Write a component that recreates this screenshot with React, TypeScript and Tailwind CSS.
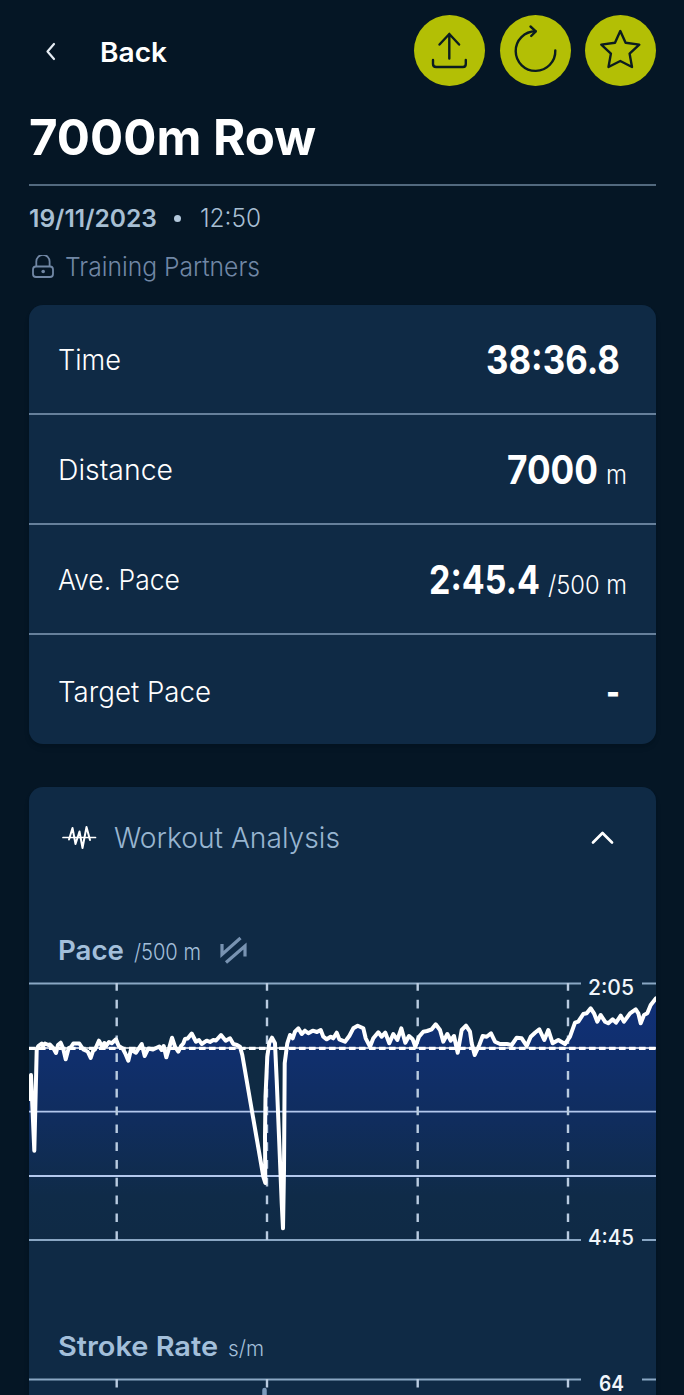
import React from "react";

const stats = [
  { label: "Time", labelWidth: 63, value: "38:36.8", unit: "", width: 134 },
  { label: "Distance", labelWidth: 115, value: "7000", unit: "m", width: 91 },
  { label: "Ave. Pace", labelWidth: 122, value: "2:45.4", unit: "/500 m", width: 111 },
  { label: "Target Pace", labelWidth: 153, value: "-", unit: "", width: 14 },
];

const pacePoints =
  "0,116 2,92 5.3,167.7 7.7,67 9.3,63 12.7,60.5 14,63 16,60.5 19.3,62 21,61.5 24.3,65 27,70 29,62 31.7,59.7 34.3,66 36.7,76.3 39.7,65 42,64 44.3,60.5 50.3,60.5 54.3,66.5 58.7,68.5 61.7,75 64,68 66,66.5 70,57.7 73,63.7 75.3,60 77,63 80,59 82.7,60.3 87,56.3 89.7,63 93.7,65.5 96.3,70.5 99.3,77.7 102,66.5 107,69.7 110,65 112.7,61 115.7,73 119.3,65.5 124,66.5 130.3,63.5 132.7,67 134.7,63 137.3,74.3 140,65.5 143,54.7 146,63.7 149.3,68.7 152,63 154.3,60.5 156,56 158.7,55.5 162.7,50.5 167,58.7 170,57 172.7,61 177.7,57.7 181,59 184.3,57 187,57.5 192,52 196.7,57.7 201,55.3 204.3,61 208,62 211,63.7 213.3,72 234.3,193.7 236.3,200 236,153.7 236.5,113.7 238.3,73.7 240.3,59.7 243,54.7 246,60.3 247.7,97 252.7,220 254,245.3 255,187 255.7,80.3 258.3,60.3 261,52 263.7,55.3 266,48.7 269.3,45.3 272.7,51 276,47.7 279.3,50.3 283.7,47.7 288,49 291.7,47 294.3,53.7 297.7,56.3 301.7,53.7 304.3,55.3 307.7,49.7 310.3,56.3 316,58.7 320.3,53 324.3,45.3 328.7,42.7 334.3,45.3 336.7,55.3 341,63.7 344.3,55.3 349.3,49.3 352.7,53.7 356.3,49.7 360.3,60.3 364.3,51 368.3,57 372.3,45.3 376.3,59.7 380,53 383.7,56.3 386.3,63.7 390,53.7 394.3,48.7 398,48 402.7,46.3 406.7,41.3 411,47 414.3,58.7 418.3,51 421.7,57.7 425,53 428.7,69.7 432.7,47 437,42.7 441,48.7 442.7,60.3 445.7,72 450.3,62 453.7,53 457.7,53.7 462,50.3 466,58.7 471,61 477.7,61 482.7,62 487.7,54.7 492.7,55.3 497.7,63 501.7,53.7 506,49.7 510.3,46.3 512,50 515.3,57 519.3,47 523.7,60.3 529.3,57 536,61 541,53.7 546,39.7 549.3,38.7 554.3,31 557.7,30.3 561.7,25.3 565,30.3 568.3,38.7 571.7,32 576,38.7 579.3,40.3 583.7,36.3 587,39.7 591.7,32.7 595,38.7 601,30.3 606.7,26.3 609.3,30.3 611.7,40.3 615,32 618.3,30.3 621.7,22 627,15.3";

const ticks = [87.7, 238, 388.7, 539];

function RoundButton({ label, children }: { label: string; children: React.ReactNode }) {
  return (
    <button aria-label={label} className="w-[71px] h-[71px] rounded-full bg-[#b3bf05] text-[#0b1c20]">
      <svg viewBox="0 0 71 71" className="w-full h-full" fill="none" stroke="currentColor" strokeWidth="2.4" strokeLinecap="round" strokeLinejoin="round">
        {children}
      </svg>
    </button>
  );
}

function FitText({ text, width, size, weight = 400, height = 40, base = 30, className }: { text: string; width: number; size: number; weight?: number; height?: number; base?: number; className?: string }) {
  return (
    <svg width={width} height={height} className={`block shrink-0 overflow-visible ${className ?? ""}`}>
      <text x="0" y={base} fontSize={size} fontWeight={weight} textLength={width} lengthAdjust="spacingAndGlyphs" fill="currentColor">
        {text}
      </text>
    </svg>
  );
}

function PaceChart() {
  return (
    <svg width="627" height="276" viewBox="0 -9 627 276" className="block">
      <defs>
        <linearGradient id="paceFill" gradientUnits="userSpaceOnUse" x1="0" y1="15" x2="0" y2="257">
          <stop offset="0" stopColor="#103078" />
          <stop offset="0.25" stopColor="#102f6c" />
          <stop offset="0.5" stopColor="#102d5e" />
          <stop offset="0.82" stopColor="#0f2b48" />
          <stop offset="1" stopColor="#0f2a45" />
        </linearGradient>
      </defs>
      <rect x="0" y="0" width="627" height="257" fill="#0f2a43" />
      <polygon points={`0,257 ${pacePoints} 627,257`} fill="url(#paceFill)" />
      <g stroke="#8aa7c4" strokeWidth="1.8">
        <path d="M0 .5H552M613 .5H627M0 257H552M613 257H627" />
        <path d="M0 128.7H627M0 193H627" stroke="#b3c8ed" />
      </g>
      <g stroke="#b9cbe0" strokeWidth="2.4" strokeDasharray="8.7 9.1" strokeDashoffset="1">
        {ticks.map((x) => (
          <path key={x} d={`M${x} 0V257`} />
        ))}
      </g>
      <path d="M0 64.9H627" stroke="#fff" strokeWidth="1.5" />
      <path d="M0 65.4H627" stroke="#fff" strokeWidth="3.2" strokeDasharray="6.6 3.4" />
      <polyline points={pacePoints} fill="none" stroke="#fff" strokeWidth="4" strokeLinejoin="round" strokeLinecap="round" />
      <g fill="#f1f6fb" fontSize="21" fontWeight="500">
        <text x="559" y="11.5" textLength="46" lengthAdjust="spacingAndGlyphs">2:05</text>
        <text x="559" y="261.5" textLength="46" lengthAdjust="spacingAndGlyphs">4:45</text>
      </g>
    </svg>
  );
}

function StrokeRateChart() {
  return (
    <svg width="627" height="30" viewBox="0 -9 627 30" className="block">
      <path d="M0 .5H552M613 .5H627" stroke="#8aa7c4" strokeWidth="2" />
      <path d="M235.5 21V11" stroke="#7d9abb" strokeWidth="4.5" strokeLinecap="round" />
      {ticks.map((x) => (
        <path key={x} d={`M${x} 0V8.5`} stroke="#b9cbe0" strokeWidth="2.4" />
      ))}
      <text x="570" y="11.5" fontSize="21" fontWeight="600" fill="#f1f6fb" textLength="25" lengthAdjust="spacingAndGlyphs">64</text>
    </svg>
  );
}

export default function App() {
  return (
    <div className="w-[684px] h-[1395px] overflow-hidden bg-[#051625] text-white font-[Inter,'Noto_Sans',sans-serif] pl-[29px] pr-[28px]">
      <header className="h-[101px] pt-[15px] flex items-start justify-between">
        <a className="flex items-center h-[73px]">
          <svg width="71" height="24" viewBox="0 0 71 24" fill="none" stroke="#e6edf4" strokeWidth="2.2" strokeLinecap="round" strokeLinejoin="round">
            <path d="M25 4 18.5 11.5 25 19" />
          </svg>
          <FitText text="Back" width={67} size={27.5} weight={600} height={36} base={28} />
        </a>
        <div className="flex gap-[14.5px]">
          <RoundButton label="Share">
            <path d="M35.3 43.5V19M25.5 29.5 35.3 19 45.1 29.5" />
            <path d="M19 45V49Q19 52 22.2 52H49Q51.8 52 51.8 49V45" />
          </RoundButton>
          <RoundButton label="Repeat">
            <path d="M35.5 16.3A19.8 19.8 0 1 0 55.3 35.5" />
            <path d="M30.5 11.5 35.8 16.3 31.2 21" />
          </RoundButton>
          <RoundButton label="Favourite">
            <path d="M35.3 16 40.6 27.8 54.3 29.6 44.6 38.6 47 52 35.3 46 23.5 52 25.9 38.6 16.3 29.6 30 27.8Z" />
          </RoundButton>
        </div>
      </header>

      <div className="h-[84.5px] pt-[8px] border-b-2 border-[#52697e]">
        <h1>
          <FitText text="7000m Row" width={287} size={50} weight={700} height={60} base={46} />
        </h1>
      </div>

      <div className="mt-[13px] h-[40px] flex items-center text-[#a8bfd3]">
        <FitText text="19/11/2023" width={128} size={24.5} weight={600} height={32} base={24} />
        <span className="ml-[17px] w-[7px] h-[7px] rounded-full bg-[#b3c8dc]" />
        <FitText text="12:50" width={61} size={25.5} weight={300} height={32} base={24} className="ml-[19px]" />
      </div>
      <div className="mt-[9px] h-[40px] flex items-center text-[#7187a5]">
        <svg width="36" height="26" viewBox="0 0 36 26" fill="none" stroke="currentColor" strokeWidth="1.8">
          <rect x="4" y="11.5" width="20" height="10.5" rx="3" />
          <path d="M7.3 11.5V6.5A6.6 6.6 0 0 1 20.6 6.5V11.5" />
          <circle cx="14.2" cy="16.5" r="1.8" fill="currentColor" stroke="none" />
        </svg>
        <FitText text="Training Partners" width={195} size={26} weight={300} height={32} base={24} />
      </div>

      <section className="mt-[17px] h-[439px] rounded-[14px] bg-[#0f2a45] shadow-md">
        {stats.map((s, i) => (
          <div key={s.label} className={`h-[110.3px] px-[29px] flex items-center justify-between ${i < stats.length - 1 ? "border-b-2 border-[#66809b]" : ""}`}>
            <FitText text={s.label} width={s.labelWidth} size={28} weight={300} base={31} />
            <span className={`flex ${s.unit ? "" : "mr-[7px]"}`}>
              <FitText text={s.value} width={s.width} size={39} weight={700} base={35} />
              {s.unit && <FitText text={s.unit} width={s.unit === "m" ? 21 : 79} size={26} weight={300} base={35} className="ml-[8px]" />}
            </span>
          </div>
        ))}
      </section>

      <section className="mt-[43px] h-[640px] rounded-t-[14px] bg-[#0f2a45] shadow-md">
        <div className="h-[102px] pl-[32px] pr-[42px] flex items-center">
          <svg width="36" height="28" viewBox="0 0 36 28" fill="none" stroke="#fff" strokeWidth="2" strokeLinecap="round" strokeLinejoin="round">
            <path d="M8 15.5 11.5 4 14.5 20 18.5 7.5 21.5 24 25.5 3 29 16" />
            <path d="M2 13.5H34.5" strokeWidth="1.7" />
          </svg>
          <h2 className="ml-[17px] text-[#98b5d0]">
            <FitText text="Workout Analysis" width={226} size={29} weight={300} height={40} base={30} />
          </h2>
          <svg width="24" height="16" viewBox="0 0 24 16" className="ml-auto" fill="none" stroke="#fff" strokeWidth="2.7" strokeLinecap="round" strokeLinejoin="round">
            <path d="M3 12.5 12.5 3 22 12.5" />
          </svg>
        </div>

        <div className="mt-[42px] h-[40px] pl-[29px] flex text-[#a3bfda]">
          <FitText text="Pace" width={66} size={27.5} weight={600} base={29} />
          <FitText text="/500 m" width={67} size={22.5} weight={300} base={29} className="ml-[10px]" />
          <svg width="30" height="30" viewBox="0 0 30 30" className="ml-[18px] mt-[5px]" fill="none" stroke="#7893b2" strokeWidth="3.2">
            <path d="M21.5 2 3 18.5V8M7 26.5 26 10V20.5" />
          </svg>
        </div>
        <div className="mt-[3px]">
          <PaceChart />
        </div>

        <div className="mt-[77px] h-[40px] pl-[29px] flex text-[#a3bfda]">
          <FitText text="Stroke Rate" width={160} size={27.5} weight={600} base={29} />
          <FitText text="s/m" width={36} size={21.5} weight={300} base={29} className="ml-[10px]" />
        </div>
        <div className="mt-[3px]">
          <StrokeRateChart />
        </div>
      </section>
    </div>
  );
}
